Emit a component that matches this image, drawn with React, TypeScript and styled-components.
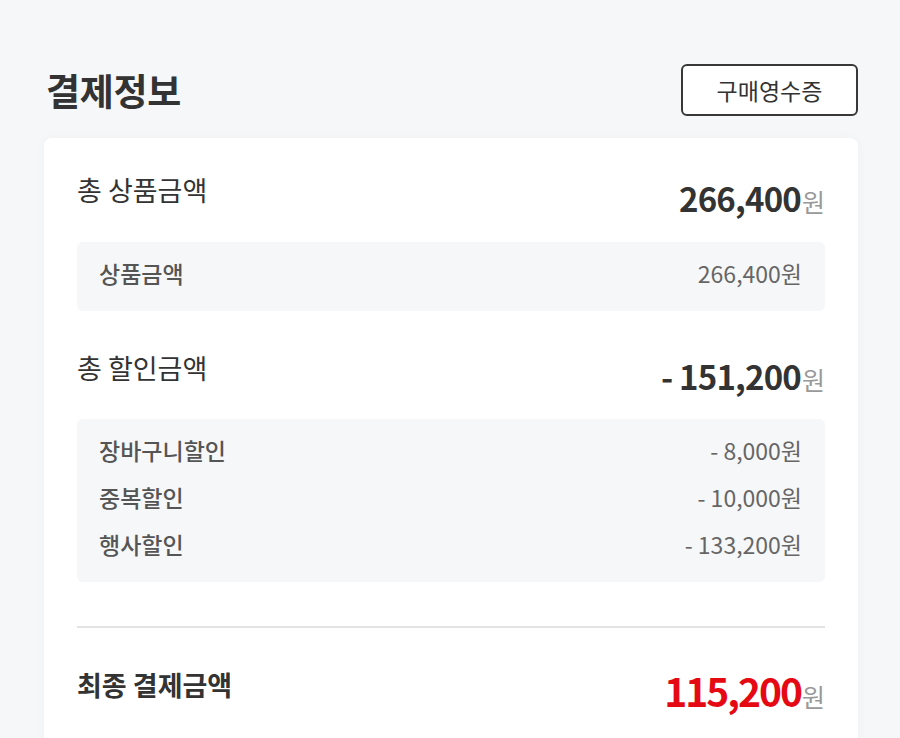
import { FC } from 'react';
import styled, { createGlobalStyle } from 'styled-components';

const GlobalStyle = createGlobalStyle`
  body {
    margin: 0;
    background: #f6f7f9;
    font-family: 'Noto Sans CJK KR', 'Noto Sans', sans-serif;
    color: #333;
  }
`;

const Page = styled.div({
  padding: '64px 42px 0 44px',
});

const Header = styled.div({
  display: 'flex',
  justifyContent: 'space-between',
  alignItems: 'center',
});

const Title = styled.h2({
  margin: '0 0 0 2px',
  fontSize: 37,
  lineHeight: '48px',
  fontWeight: 700,
  color: '#333',
  letterSpacing: -0.3,
});

const ReceiptBtn = styled.button({
  width: 177,
  height: 52,
  boxSizing: 'border-box',
  border: '2px solid #383838',
  borderRadius: 6,
  background: '#fff',
  color: '#333',
  fontFamily: 'inherit',
  fontSize: 23,
  padding: 0,
});

const Card = styled.div({
  marginTop: 22,
  background: '#fff',
  borderRadius: 8,
  boxShadow: '0 0 12px rgba(0, 0, 0, 0.03)',
  padding: '35px 33px 40px',
});

const Section = styled.section<{ $gap?: number }>(({ $gap = 0 }) => ({
  marginTop: $gap,
}));

const Row = styled.div({
  display: 'flex',
  justifyContent: 'space-between',
  alignItems: 'flex-start',
});

const Label = styled.span<{ $bold?: boolean }>(({ $bold }) => ({
  fontSize: 27,
  lineHeight: '34px',
  fontWeight: $bold ? 700 : 400,
  color: '#333',
}));

const Amount = styled.span<{ $red?: boolean }>(({ $red }) => ({
  marginTop: $red ? 2 : 8,
  fontSize: $red ? 39 : 33,
  lineHeight: $red ? '40px' : '34px',
  fontWeight: 700,
  color: $red ? '#e50914' : '#333',
  letterSpacing: $red ? -2 : -0.8,
}));

const Won = styled.span({
  marginLeft: 1,
  fontSize: 25,
  fontWeight: 400,
  color: '#999',
  letterSpacing: 0,
});

const DetailBox = styled.div<{ $gap?: number }>(({ $gap = 25 }) => ({
  marginTop: $gap,
  background: '#f6f7f9',
  borderRadius: 6,
  padding: '15px 23px 22px 22px',
  display: 'flex',
  flexDirection: 'column',
  gap: 15,
}));

const DetailRow = styled.div({
  display: 'flex',
  justifyContent: 'space-between',
  fontSize: 23,
  lineHeight: '32px',
});

const DetailLabel = styled.span({
  fontWeight: 500,
  color: '#555',
});

const DetailValue = styled.span({
  color: '#666',
});

const Divider = styled.hr({
  margin: '44px 0 0',
  border: 'none',
  borderTop: '2px solid #e3e3e3',
});

type Detail = { label: string; value: string };

const discounts: Detail[] = [
  { label: '장바구니할인', value: '- 8,000원' },
  { label: '중복할인', value: '- 10,000원' },
  { label: '행사할인', value: '- 133,200원' },
];

const SummaryRow: FC<{ label: string; amount: string; bold?: boolean; red?: boolean }> = ({
  label,
  amount,
  bold,
  red,
}) => (
  <Row>
    <Label $bold={bold}>{label}</Label>
    <Amount $red={red}>
      {amount}
      <Won>원</Won>
    </Amount>
  </Row>
);

const App: FC = () => {
  return (
    <>
      <GlobalStyle />
      <Page>
        <Header>
          <Title>결제정보</Title>
          <ReceiptBtn>구매영수증</ReceiptBtn>
        </Header>
        <Card>
          <Section>
            <SummaryRow label="총 상품금액" amount="266,400" />
            <DetailBox $gap={24}>
              <DetailRow>
                <DetailLabel>상품금액</DetailLabel>
                <DetailValue>266,400원</DetailValue>
              </DetailRow>
            </DetailBox>
          </Section>
          <Section $gap={40}>
            <SummaryRow label="총 할인금액" amount="- 151,200" />
            <DetailBox $gap={23}>
              {discounts.map((d) => (
                <DetailRow key={d.label}>
                  <DetailLabel>{d.label}</DetailLabel>
                  <DetailValue>{d.value}</DetailValue>
                </DetailRow>
              ))}
            </DetailBox>
          </Section>
          <Divider />
          <Section $gap={40}>
            <SummaryRow label="최종 결제금액" amount="115,200" bold red />
          </Section>
        </Card>
      </Page>
    </>
  );
};

export default App;
